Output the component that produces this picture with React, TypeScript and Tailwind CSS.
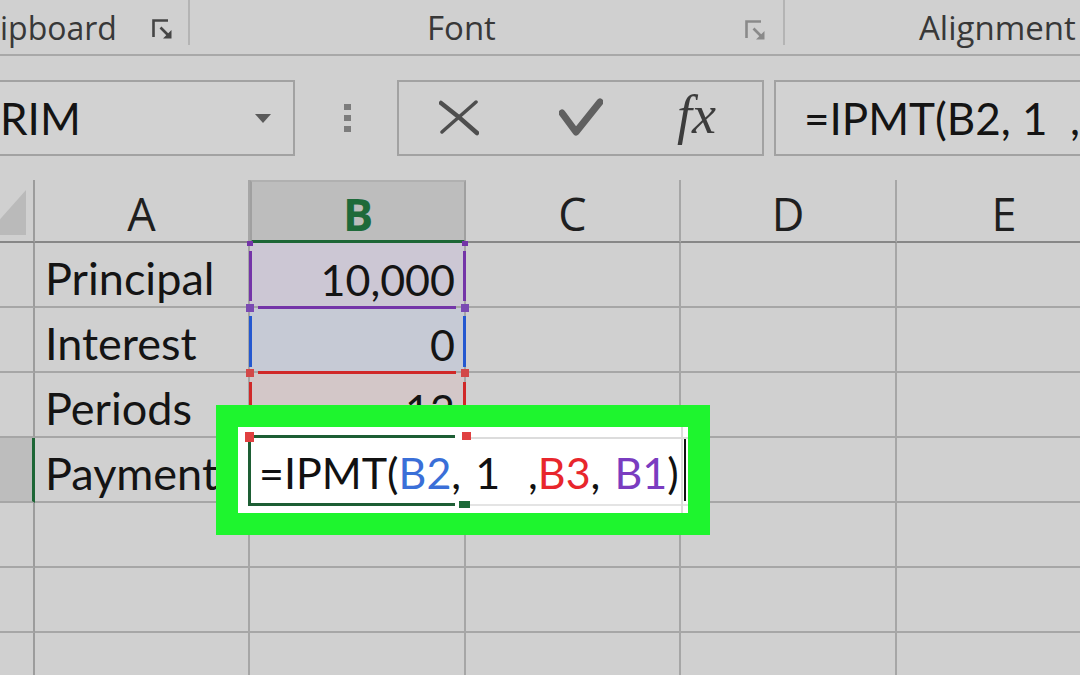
import React from "react";

function Launcher({ light = false }: { light?: boolean }) {
  const c = light ? "#8a8a8a" : "#454545";
  return (
    <svg width="24" height="22" viewBox="0 0 24 22" className="shrink-0">
      <path d="M2.5 19 V2.5 H17" stroke={c} strokeWidth="2.6" fill="none" />
      <path d="M9.5 9.5 L18 18" stroke={c} strokeWidth="2.6" />
      <path d="M20.5 12 V20.5 H12 Z" fill={c} />
    </svg>
  );
}

const cols = ["A", "B", "C", "D", "E"];

const rows: { a: string; b: string; bBg: string }[] = [
  { a: "Principal", b: "10,000", bBg: "bg-[#ccc7d4]" },
  { a: "Interest", b: "0", bBg: "bg-[#c6cad5]" },
  { a: "Periods", b: "12", bBg: "bg-[#d3c7c8]" },
  { a: "Payment", b: "", bBg: "bg-[#d0d0d0]" },
  { a: "", b: "", bBg: "bg-[#d0d0d0]" },
  { a: "", b: "", bBg: "bg-[#d0d0d0]" },
  { a: "", b: "", bBg: "bg-[#d0d0d0]" },
];

function Formula() {
  return (
    <span className="whitespace-pre">
      <span>=IPMT(</span>
      <span className="text-[#3a6fd8]">B2</span>
      <span>, 1  ,</span>
      <span className="text-[#e8262c]">B3</span>
      <span>, </span>
      <span className="text-[#7a3cc0]">B1</span>
      <span>)</span>
    </span>
  );
}

export default function App() {
  return (
    <div className="relative w-[1080px] h-[675px] overflow-hidden bg-[#d0d0d0] text-[#141414] font-['Lato',sans-serif]">
      {/* Ribbon group labels */}
      <div className="flex h-[56px] border-b-2 border-[#a8a8a8] font-['Open_Sans',sans-serif] text-[32px] text-[#383838]">
        <div className="w-[188px] shrink-0 flex items-start pt-[6px]">
          <span className="leading-[44px]">ipboard</span>
          <div className="ml-auto mr-[13px] mt-[12px]">
            <Launcher />
          </div>
        </div>
        <div className="w-[2px] h-[45px] bg-[#b4b4b4] shrink-0" />
        <div className="w-[593px] shrink-0 flex items-start pt-[6px]">
          <span className="ml-[237px] leading-[44px] text-[33px]">Font</span>
          <div className="ml-auto mr-[15px] mt-[13px]">
            <Launcher light />
          </div>
        </div>
        <div className="w-[2px] h-[45px] bg-[#b4b4b4] shrink-0" />
        <div className="flex-1 pl-[134px] pt-[6px] whitespace-nowrap leading-[44px] text-[33px]">Alignment</div>
      </div>

      {/* Formula bar */}
      <div className="flex items-start pt-[24px] h-[124px]">
        <div className="-ml-[10px] w-[305px] h-[76px] shrink-0 border-2 border-[#a2a2a2] bg-[#d2d2d2] flex items-center pl-[8px] pr-[22px] text-[44px]">
          <span className="leading-none">RIM</span>
          <svg width="16" height="9" viewBox="0 0 16 9" className="ml-auto">
            <path d="M0 0 H16 L8 9 Z" fill="#5a5a5a" />
          </svg>
        </div>
        <div className="ml-[49px] mt-[24px] flex flex-col gap-[5px] shrink-0">
          <div className="w-[7px] h-[6px] bg-[#7c7c7c]" />
          <div className="w-[7px] h-[6px] bg-[#7c7c7c]" />
          <div className="w-[7px] h-[6px] bg-[#7c7c7c]" />
        </div>
        <div className="ml-[46px] w-[367px] h-[76px] shrink-0 border-2 border-[#a2a2a2] flex items-center">
          <svg width="40" height="36" viewBox="0 0 40 36" className="ml-[40px]">
            <path d="M2 3 C14 12 26 22 38 33" stroke="#4e4e4e" strokeWidth="4.5" strokeLinecap="round" fill="none" />
            <path d="M37 2 C26 12 14 22 3 32" stroke="#4e4e4e" strokeWidth="3.5" strokeLinecap="round" fill="none" />
          </svg>
          <svg width="44" height="40" viewBox="0 0 44 40" className="ml-[80px]">
            <path d="M3 15 L17 34 L41 4" stroke="#606060" strokeWidth="7" strokeLinejoin="round" strokeLinecap="round" fill="none" />
          </svg>
          <span className="ml-[74px] -mt-[6px] font-['Liberation_Serif',serif] italic text-[54px] text-[#3c3c3c] leading-none">fx</span>
        </div>
        <div className="ml-[10px] w-[330px] h-[76px] shrink-0 border-2 border-[#a2a2a2] bg-[#d2d2d2] flex items-center pl-[28px] overflow-hidden text-[44px]">
          <span className="whitespace-pre leading-none">=IPMT(B2, 1  ,B3, B1)</span>
        </div>
      </div>

      {/* Grid */}
      <div className="grid grid-cols-[35px_215px_216px_215px_216px_216px] grid-rows-[63px_repeat(7,65px)]">
        {/* header row */}
        <div className="relative overflow-hidden border-r-2 border-b-2 border-r-[#9c9c9c] border-b-[#878787]">
          <svg width="40" height="45" viewBox="0 0 40 45" className="absolute left-[-14px] top-[10px]">
            <path d="M40 0 V45 H0 Z" fill="#bababa" />
          </svg>
        </div>
        {cols.map((c) =>
          c === "B" ? (
            <div
              key={c}
              className="flex items-center justify-center pt-[6px] bg-[#bdbdbd] border-x-2 border-t-2 border-x-[#a0a0a0] border-t-[#b0b0b0] border-b-[3px] border-b-[#1d6636] font-['Open_Sans',sans-serif] font-bold text-[45px] text-[#1e6a3a]"
            >
              B
            </div>
          ) : (
            <div
              key={c}
              className="flex items-center justify-center pt-[6px] border-r-2 border-b-2 border-r-[#a6a6a6] border-b-[#878787] font-['Open_Sans',sans-serif] text-[45px] text-[#1f1f1f]"
            >
              {c}
            </div>
          )
        )}

        {rows.map((r, i) => (
          <React.Fragment key={i}>
            <div
              className={
                i === 3
                  ? "bg-[#bdbdbd] border-b-2 border-b-[#a6a6a6] border-r-[3px] border-r-[#1d6636]"
                  : "border-b-2 border-r-2 border-b-[#a6a6a6] border-r-[#9c9c9c]"
              }
            />
            <div className="flex items-end pl-[10px] pb-[5px] border-r-2 border-b-2 border-[#a6a6a6] text-[45px] leading-none whitespace-nowrap">
              {r.a}
            </div>
            <div className={`flex items-end justify-end pr-[9px] pb-[5px] border-r-2 border-b-2 border-[#a6a6a6] text-[43px] leading-none ${r.bBg}`}>
              {r.b}
            </div>
            <div className="border-r-2 border-b-2 border-[#a6a6a6]" />
            <div className="border-r-2 border-b-2 border-[#a6a6a6]" />
            <div className="border-r-2 border-b-2 border-[#a6a6a6]" />
          </React.Fragment>
        ))}
      </div>

      {/* Formula reference highlight borders drawn over column B (overlay) */}
      <div className="absolute left-0 top-0 w-0 h-0">
        {/* purple: B1 */}
        <div className="absolute left-[247px] top-[241px] w-[6px] h-[5px] bg-[#7434a8]" />
        <div className="absolute left-[462px] top-[241px] w-[6px] h-[5px] bg-[#7434a8]" />
        <div className="absolute left-[249px] top-[251px] w-[3px] h-[50px] bg-[#7434a8]" />
        <div className="absolute left-[463px] top-[251px] w-[3px] h-[50px] bg-[#7434a8]" />
        <div className="absolute left-[258px] top-[306px] w-[198px] h-[3px] bg-[#7434a8]" />
        <div className="absolute left-[246px] top-[304px] w-[8px] h-[8px] bg-[#7a4ab2]" />
        <div className="absolute left-[461px] top-[304px] w-[8px] h-[8px] bg-[#7a4ab2]" />
        {/* blue: B2 */}
        <div className="absolute left-[249px] top-[316px] w-[3px] h-[51px] bg-[#2458d0]" />
        <div className="absolute left-[463px] top-[316px] w-[3px] h-[51px] bg-[#2458d0]" />
        {/* red: B3 */}
        <div className="absolute left-[258px] top-[371px] w-[198px] h-[3px] bg-[#d02828]" />
        <div className="absolute left-[246px] top-[369px] w-[8px] h-[8px] bg-[#d24848]" />
        <div className="absolute left-[461px] top-[369px] w-[8px] h-[8px] bg-[#d24848]" />
        <div className="absolute left-[249px] top-[382px] w-[3px] h-[30px] bg-[#d02828]" />
        <div className="absolute left-[463px] top-[382px] w-[3px] h-[30px] bg-[#d02828]" />
      </div>

      {/* Green callout box with the in-cell editor */}
      <div className="absolute left-[216px] top-[405px] w-[494px] h-[130px] border-[22px] border-[#1ef52e] bg-white">
        <div className="relative w-full h-full pt-[8px] pl-[10px]">
          {/* faint grid lines showing through */}
          <div className="absolute left-[232px] top-[10px] right-0 h-[2px] bg-[#dcdcdc]" />
          <div className="absolute left-[232px] top-[77px] right-0 h-[2px] bg-[#e4e4e4]" />
          <div className="absolute left-[443px] top-0 bottom-0 w-[2px] bg-[#dcdcdc]" />

          {/* active cell with its formula */}
          <div className="relative w-[207px] h-[71px] border-l-[3px] border-t-[3px] border-b-[3px] border-[#1d5e34] flex items-center pl-[8px] pt-[4px]">
            <div className="shrink-0 whitespace-nowrap text-[43px] leading-none text-[#111] [word-spacing:3px]">
              <Formula />
            </div>
            <div className="shrink-0 ml-[5px] -mt-[6px] w-[2px] h-[62px] bg-[#111]" />
          </div>

          {/* handles */}
          <div className="absolute left-[7px] top-[5px] w-[9px] h-[10px] bg-[#e04040]" />
          <div className="absolute left-[224px] top-[5px] w-[9px] h-[8px] bg-[#e04040]" />
          <div className="absolute left-[221px] top-[74px] w-[11px] h-[7px] bg-[#1d6a38]" />
        </div>
      </div>
    </div>
  );
}
